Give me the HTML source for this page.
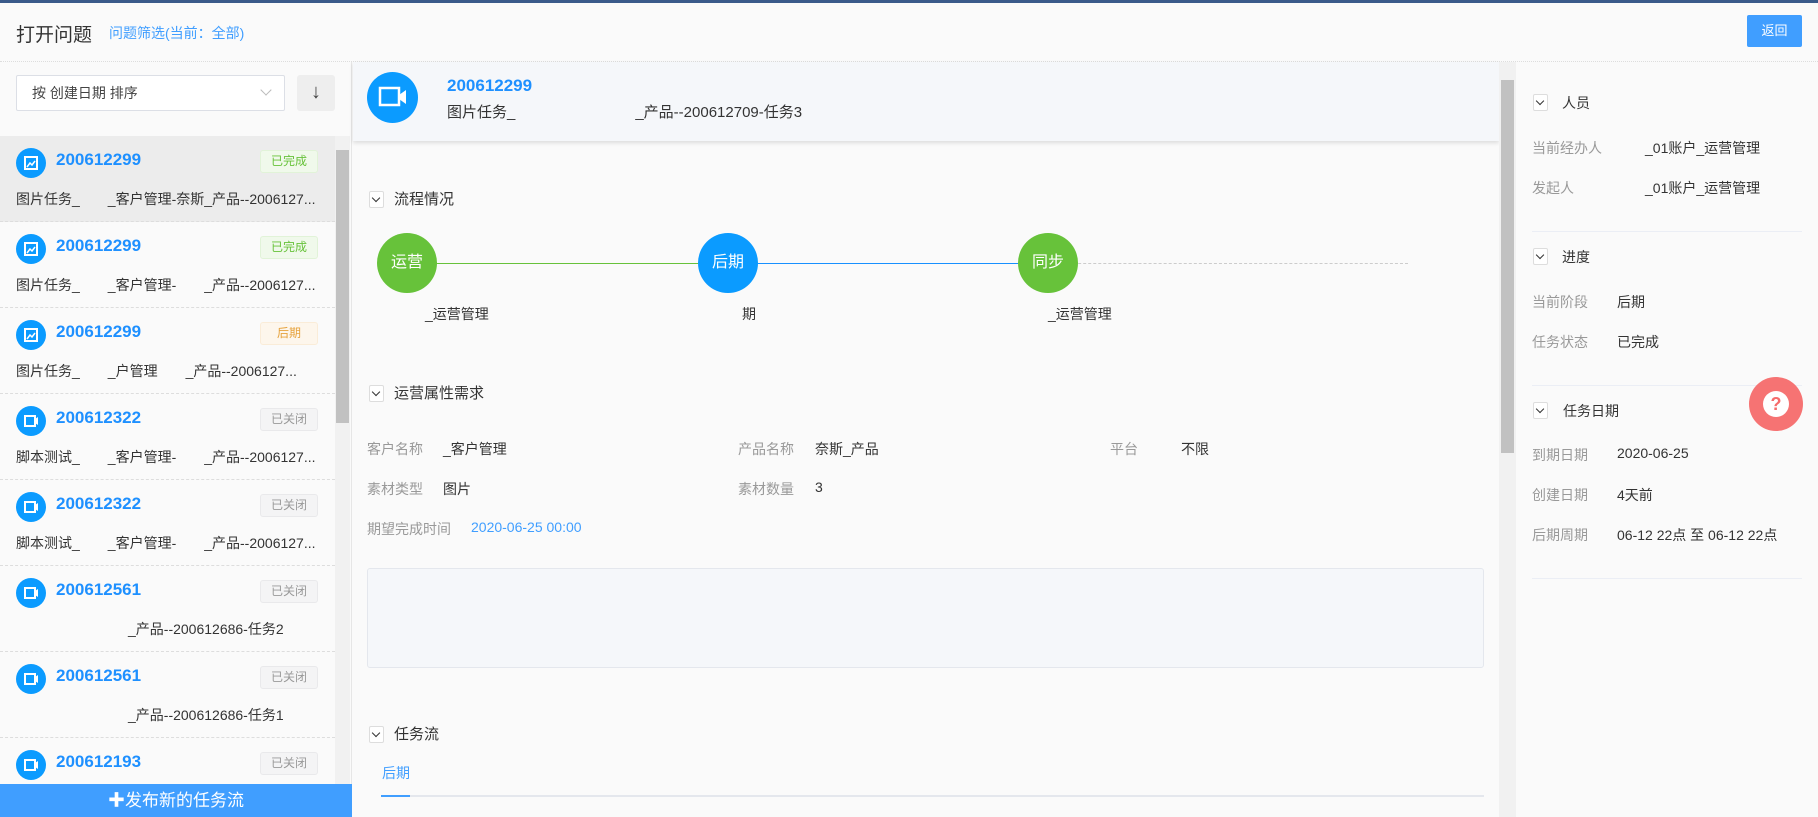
<!DOCTYPE html>
<html><head><meta charset="utf-8"><style>
*{box-sizing:border-box;margin:0;padding:0}
body{width:1818px;height:817px;overflow:hidden;background:#fafafa;font-family:"Liberation Sans","Noto Sans CJK SC",sans-serif;font-size:14px;color:#333;position:relative}
.a{position:absolute;white-space:nowrap}
.blue{color:#1890ff}
.chev{position:absolute;width:15px;height:17px;border:1px solid #ddd;border-radius:2px;background:#fff}
.chev:after{content:"";position:absolute;left:3px;top:3px;width:5px;height:5px;border-right:1.5px solid #333;border-bottom:1.5px solid #333;transform:rotate(45deg)}
.item{position:absolute;left:0;width:335px;height:86px;border-bottom:1px dashed #ddd}
.ic{position:absolute;left:16px;top:12px;width:30px;height:30px;border-radius:50%;background:#0b9bff}
.id{position:absolute;left:56px;top:14px;font-size:17px;font-weight:bold;color:#1e90ff}
.bd{position:absolute;left:260px;top:14px;width:58px;height:23px;border-radius:3px;font-size:12px;text-align:center;line-height:21px;border:1px solid}
.sub{position:absolute;left:16px;top:53px;font-size:14px;color:#333}
.lbl{color:#999}
.node{position:absolute;width:60px;height:60px;border-radius:50%;color:#fff;font-size:16px;text-align:center;line-height:60px}
</style></head><body>
<div class="a" style="left:0;top:0;width:1818px;height:3px;background:#3a5a8a"></div>
<div class="a" style="left:16px;top:20px;font-size:19px;color:#333">打开问题</div>
<div class="a" style="left:109px;top:23px;font-size:14px;color:#409eff">问题筛选(当前：全部)</div>
<div class="a" style="left:1747px;top:15px;width:55px;height:32px;background:#409eff;border-radius:2px;color:#fff;font-size:13px;text-align:center;line-height:32px">返回</div>
<div class="a" style="left:0;top:61px;width:1818px;border-top:1px dotted #ddd"></div>

<!-- left -->
<div class="a" style="left:0;top:62px;width:352px;height:755px;background:#fafafa;border-right:1px solid #e6e6e6"></div>
<div class="a" style="left:16px;top:75px;width:269px;height:36px;border:1px solid #dcdfe6;background:#fff;border-radius:2px"></div>
<div class="a" style="left:32px;top:83px;font-size:14px;color:#444">按 创建日期 排序</div>
<div class="a" style="left:262px;top:86px;width:8px;height:8px;border-right:1px solid #bbb;border-bottom:1px solid #bbb;transform:rotate(45deg)"></div>
<div class="a" style="left:297px;top:75px;width:38px;height:36px;background:#eee;border-radius:3px;text-align:center;line-height:34px;font-size:20px;color:#444">↓</div>
<div class="a" style="left:0;top:136px;width:350px;height:648px;overflow:hidden">
 <div class="item" style="top:0;background:#ececec"><div class="ic img"></div><div class="id">200612299</div><div class="bd" style="color:#67c23a;background:#f0f9eb;border-color:#e1f3d8">已完成</div><div class="sub">图片任务_　　_客户管理-奈斯_产品--2006127...</div></div>
 <div class="item" style="top:86px"><div class="ic img"></div><div class="id">200612299</div><div class="bd" style="color:#67c23a;background:#f0f9eb;border-color:#e1f3d8">已完成</div><div class="sub">图片任务_　　_客户管理-　　_产品--2006127...</div></div>
 <div class="item" style="top:172px"><div class="ic img"></div><div class="id">200612299</div><div class="bd" style="color:#e6a23c;background:#fdf6ec;border-color:#faecd8">后期</div><div class="sub">图片任务_　　_户管理　　_产品--2006127...</div></div>
 <div class="item" style="top:258px"><div class="ic vid"></div><div class="id">200612322</div><div class="bd" style="color:#999;background:#f4f4f5;border-color:#e9e9eb">已关闭</div><div class="sub">脚本测试_　　_客户管理-　　_产品--2006127...</div></div>
 <div class="item" style="top:344px"><div class="ic vid"></div><div class="id">200612322</div><div class="bd" style="color:#999;background:#f4f4f5;border-color:#e9e9eb">已关闭</div><div class="sub">脚本测试_　　_客户管理-　　_产品--2006127...</div></div>
 <div class="item" style="top:430px"><div class="ic vid"></div><div class="id">200612561</div><div class="bd" style="color:#999;background:#f4f4f5;border-color:#e9e9eb">已关闭</div><div class="sub">　　　　　　　　_产品--200612686-任务2</div></div>
 <div class="item" style="top:516px"><div class="ic vid"></div><div class="id">200612561</div><div class="bd" style="color:#999;background:#f4f4f5;border-color:#e9e9eb">已关闭</div><div class="sub">　　　　　　　　_产品--200612686-任务1</div></div>
 <div class="item" style="top:602px"><div class="ic vid"></div><div class="id">200612193</div><div class="bd" style="color:#999;background:#f4f4f5;border-color:#e9e9eb">已关闭</div></div>
</div>
<div class="a" style="left:335px;top:136px;width:15px;height:648px;background:#f1f1f1"></div>
<div class="a" style="left:336px;top:150px;width:13px;height:273px;background:#c1c1c1"></div>
<div class="a" style="left:0;top:784px;width:352px;height:33px;background:#409eff;color:#fff;font-size:17px;text-align:center;line-height:33px">✚发布新的任务流</div>

<!-- middle -->
<div class="a" style="left:353px;top:62px;width:1146px;height:79px;background:#f5f7fa;box-shadow:0 2px 4px rgba(0,0,0,.12)"></div>
<div class="a" style="left:367px;top:72px;width:51px;height:51px;border-radius:50%;background:#0b9bff"></div>
<svg class="a" style="left:378px;top:86px" width="30" height="22"><rect x="2" y="2" width="19" height="17" fill="none" stroke="#fff" stroke-width="2.5"/><path d="M21 9 L28 4 L28 18 L21 13Z" fill="#fff"/></svg>
<div class="a" style="left:447px;top:76px;font-size:17px;font-weight:bold;color:#1e90ff">200612299</div>
<div class="a" style="left:447px;top:101px;font-size:15px;color:#333">图片任务_　　　　　　　　_产品--200612709-任务3</div>
<div class="a" style="left:1499px;top:62px;width:17px;height:755px;background:#f1f1f1"></div>
<div class="a" style="left:1501px;top:80px;width:13px;height:373px;background:#c1c1c1"></div>

<div class="chev" style="left:369px;top:191px"></div><div class="a" style="left:394px;top:188px;font-size:15px">流程情况</div>
<div class="a" style="left:407px;top:263px;width:321px;height:1px;background:#67c23a"></div>
<div class="a" style="left:728px;top:263px;width:320px;height:1px;background:#1890ff"></div>
<div class="a" style="left:1048px;top:263px;width:360px;border-top:1px dashed #ccc"></div>
<div class="node" style="left:377px;top:233px;background:#67c23a">运营</div>
<div class="node" style="left:698px;top:233px;background:#0b9bff">后期</div>
<div class="node" style="left:1018px;top:233px;background:#67c23a">同步</div>
<div class="a" style="left:425px;top:304px">_运营管理</div>
<div class="a" style="left:742px;top:304px">期</div>
<div class="a" style="left:1048px;top:304px">_运营管理</div>

<div class="chev" style="left:369px;top:385px"></div><div class="a" style="left:394px;top:382px;font-size:15px">运营属性需求</div>
<div class="a lbl" style="left:367px;top:439px">客户名称</div><div class="a" style="left:443px;top:439px">_客户管理</div>
<div class="a lbl" style="left:738px;top:439px">产品名称</div><div class="a" style="left:815px;top:439px">奈斯_产品</div>
<div class="a lbl" style="left:1110px;top:439px">平台</div><div class="a" style="left:1181px;top:439px">不限</div>
<div class="a lbl" style="left:367px;top:479px">素材类型</div><div class="a" style="left:443px;top:479px">图片</div>
<div class="a lbl" style="left:738px;top:479px">素材数量</div><div class="a" style="left:815px;top:479px">3</div>
<div class="a lbl" style="left:367px;top:519px">期望完成时间</div><div class="a blue" style="left:471px;top:519px;color:#409eff">2020-06-25 00:00</div>
<div class="a" style="left:367px;top:568px;width:1117px;height:100px;background:#f5f7fa;border:1px solid #e4e7ed;border-radius:3px"></div>

<div class="chev" style="left:369px;top:726px"></div><div class="a" style="left:394px;top:723px;font-size:15px">任务流</div>
<div class="a" style="left:382px;top:763px;color:#409eff">后期</div>
<div class="a" style="left:381px;top:795px;width:1103px;height:2px;background:#e4e7ed"></div>
<div class="a" style="left:381px;top:795px;width:29px;height:2px;background:#409eff"></div>

<!-- right -->
<div class="chev" style="left:1533px;top:94px"></div><div class="a" style="left:1562px;top:93px">人员</div>
<div class="a lbl" style="left:1532px;top:138px">当前经办人</div><div class="a" style="left:1617px;top:138px">　　_01账户_运营管理</div>
<div class="a lbl" style="left:1532px;top:178px">发起人</div><div class="a" style="left:1617px;top:178px">　　_01账户_运营管理</div>
<div class="a" style="left:1532px;top:231px;width:270px;border-top:1px solid #ebeef5"></div>
<div class="chev" style="left:1533px;top:248px"></div><div class="a" style="left:1562px;top:247px">进度</div>
<div class="a lbl" style="left:1532px;top:292px">当前阶段</div><div class="a" style="left:1617px;top:292px">后期</div>
<div class="a lbl" style="left:1532px;top:332px">任务状态</div><div class="a" style="left:1617px;top:332px">已完成</div>
<div class="a" style="left:1532px;top:385px;width:270px;border-top:1px solid #ebeef5"></div>
<div class="chev" style="left:1533px;top:402px"></div><div class="a" style="left:1563px;top:401px">任务日期</div>
<div class="a lbl" style="left:1532px;top:445px">到期日期</div><div class="a" style="left:1617px;top:445px">2020-06-25</div>
<div class="a lbl" style="left:1532px;top:485px">创建日期</div><div class="a" style="left:1617px;top:485px">4天前</div>
<div class="a lbl" style="left:1532px;top:525px">后期周期</div><div class="a" style="left:1617px;top:525px">06-12 22点 至 06-12 22点</div>
<div class="a" style="left:1532px;top:578px;width:270px;border-top:1px solid #ebeef5"></div>
<div class="a" style="left:1749px;top:377px;width:54px;height:54px;border-radius:50%;background:#f56c6c;opacity:.95"></div>
<div class="a" style="left:1763px;top:391px;width:26px;height:26px;border-radius:50%;background:#fff;color:#f56c6c;font-weight:bold;font-size:18px;text-align:center;line-height:26px">?</div>

<script>
document.querySelectorAll('.ic.vid').forEach(function(e){e.innerHTML='<svg width="30" height="30"><rect x="9" y="10" width="10" height="10" fill="none" stroke="#fff" stroke-width="2"/><path d="M19 13 L22 11 L22 19 L19 17Z" fill="#fff"/></svg>';});
document.querySelectorAll('.ic.img').forEach(function(e){e.innerHTML='<svg width="30" height="30"><rect x="9" y="9" width="12" height="12" fill="none" stroke="#fff" stroke-width="2"/><path d="M11 19 L14 15 L16 17 L19 13" fill="none" stroke="#fff" stroke-width="1.5"/></svg>';});
</script>
</body></html>
